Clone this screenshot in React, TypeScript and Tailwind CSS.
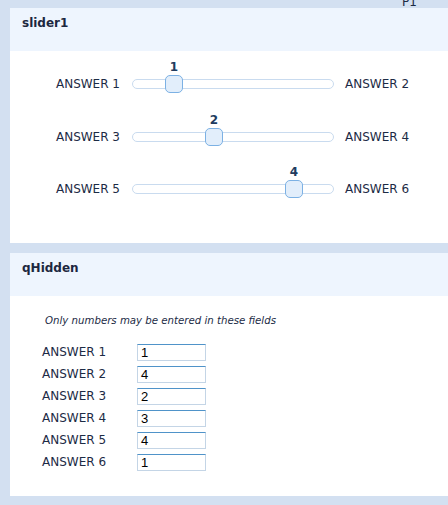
import React from "react";

const font = { fontFamily: '"DejaVu Sans", Verdana, sans-serif' };

function SliderRow({ left, right, value }: { left: string; right: string; value: number }) {
  const center = 2 + 40 * value; // relative to track left
  return (
    <div className="flex items-center h-[18px]">
      <div className="w-[110px] text-right text-[12px] text-[#1c2b45]">{left}</div>
      <div className="ml-[12px] w-[202px] h-[10px] relative rounded-full border border-[#c9dbef] bg-white">
        <div
          className="absolute top-[-5px] w-[18px] h-[18px] rounded-[5px] border border-[#7cb1e4] bg-[#e2eefb]"
          style={{ left: center - 10 }}
        />
        <div
          className="absolute top-[-20px] w-[20px] text-center text-[12px] font-bold text-[#213b5e] leading-[14px]"
          style={{ left: center - 11 }}
        >
          {value}
        </div>
      </div>
      <div className="ml-[11px] text-[12px] text-[#1c2b45]">{right}</div>
    </div>
  );
}

function Field({ label, value }: { label: string; value: string }) {
  return (
    <div className="flex items-center h-[22px]">
      <div className="w-[95px] text-[12px] text-[#1c2b45]">{label}</div>
      <div
        className="w-[69px] h-[17px] border border-[#c4d5e6] border-t-[#4f93c9] bg-white pl-[3px] text-[13px] leading-[15px] text-black"
        style={{ fontFamily: '"Liberation Sans", Arial, sans-serif' }}
      >
        {value}
      </div>
    </div>
  );
}

export default function App() {
  return (
    <div className="w-[448px] h-[505px] bg-[#d3e0f1] overflow-hidden" style={font}>
      <div className="h-[8px] overflow-hidden relative">
        <div className="absolute left-[402px] top-[-5px] text-[12px] leading-[14px] text-[#1c2b45]">P1</div>
      </div>
      <div className="ml-[10px]">
        <div className="h-[43px] bg-[#eef5fe] pl-[12px] pt-[8px]">
          <div className="text-[12px] font-bold text-[#1c2740] leading-[14px]">slider1</div>
        </div>
        <div className="h-[192px] bg-white pt-[24px] flex flex-col gap-[34.5px]">
          <SliderRow left="ANSWER 1" right="ANSWER 2" value={1} />
          <SliderRow left="ANSWER 3" right="ANSWER 4" value={2} />
          <SliderRow left="ANSWER 5" right="ANSWER 6" value={4} />
        </div>
        <div className="h-[10px]" />
        <div className="h-[43px] bg-[#eef5fe] pl-[12px] pt-[8px]">
          <div className="text-[12px] font-bold text-[#1c2740] leading-[14px]">qHidden</div>
        </div>
        <div className="h-[200px] bg-white pl-[32px] pt-[19px]">
          <div className="pl-[3px] text-[10.2px] italic text-[#1c2b45] leading-[12px]">
            Only numbers may be entered in these fields
          </div>
          <div className="mt-[14px] flex flex-col">
            <Field label="ANSWER 1" value="1" />
            <Field label="ANSWER 2" value="4" />
            <Field label="ANSWER 3" value="2" />
            <Field label="ANSWER 4" value="3" />
            <Field label="ANSWER 5" value="4" />
            <Field label="ANSWER 6" value="1" />
          </div>
        </div>
      </div>
    </div>
  );
}
